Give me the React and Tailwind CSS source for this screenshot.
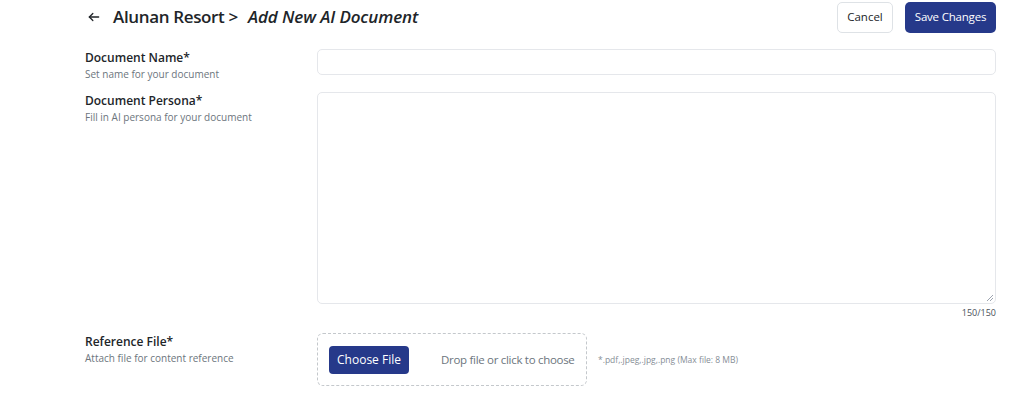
import React from "react";

export default function App() {
  return (
    <div className="w-[1024px] h-[412px] bg-white overflow-hidden text-[#212529]" style={{ fontFamily: '"Open Sans", "Noto Sans", sans-serif' }}>
      <div className="pl-[85px] pr-[28px]">
        {/* Header */}
        <div className="flex items-center justify-between h-[33px] pt-[1px]">
          <div className="flex items-center">
            <svg width="14" height="14" viewBox="0 0 24 24" fill="none" stroke="#212529" strokeWidth="2.2" strokeLinecap="round" strokeLinejoin="round" className="ml-[2px] mr-[12px] mt-[-1px]">
              <path d="M20 12H4" />
              <path d="M10 6l-6 6 6 6" />
            </svg>
            <span className="text-[17px] font-semibold tracking-[-0.35px]">Alunan Resort &gt;</span>
            <span className="text-[17px] font-semibold italic ml-[10px] tracking-[-0.1px]">Add New AI Document</span>
          </div>
          <div className="flex items-center gap-[12px]">
            <button className="h-[31px] w-[56px] rounded-[5px] border border-[#dee2e6] bg-white text-[11.5px] text-[#212529]">Cancel</button>
            <button className="h-[31px] w-[91px] rounded-[5px] bg-[#26398a] text-white text-[11.5px] tracking-[-0.2px]">Save Changes</button>
          </div>
        </div>

        {/* Document Name */}
        <div className="flex items-start mt-[16px]">
          <div className="w-[232px] shrink-0 pt-[1px]">
            <div className="text-[12px] font-semibold leading-[16px]">Document Name*</div>
            <div className="text-[10px] text-[#6c757d] leading-[14px] mt-[1px]">Set name for your document</div>
          </div>
          <div className="flex-1 h-[26px] rounded-[5px] border border-[#e5e7eb]" />
        </div>

        {/* Document Persona */}
        <div className="flex mt-[11px]">
          <div className="w-[232px] shrink-0 pt-[1px]">
            <div className="text-[12px] font-semibold leading-[16px]">Document Persona*</div>
            <div className="text-[10px] text-[#6c757d] leading-[14px] mt-[1px]">Fill in AI persona for your document</div>
          </div>
          <div className="flex-1 flex flex-col">
            <div className="relative h-[212px] rounded-[5px] border border-[#e5e7eb]">
              <svg width="7" height="7" viewBox="0 0 7 7" className="absolute right-[2px] bottom-[2px]" stroke="#9ca3af" strokeWidth="1">
                <path d="M7 1L1 7" />
                <path d="M7 4L4 7" />
              </svg>
            </div>
            <div className="text-right text-[9px] text-[#495057] mt-[2px] leading-[14px]">150/150</div>
          </div>
        </div>

        {/* Reference File */}
        <div className="flex mt-[13px]">
          <div className="w-[232px] shrink-0 pt-[1px]">
            <div className="text-[12px] font-semibold leading-[16px]">Reference File*</div>
            <div className="text-[10px] text-[#6c757d] leading-[14px] mt-[1px]">Attach file for content reference</div>
          </div>
          <div className="flex items-center">
            <div className="w-[270px] h-[53px] rounded-[6px] border border-dashed border-[#c4c8cc] flex items-center pl-[11px]">
              <button className="h-[28px] w-[80px] rounded-[4px] bg-[#26398a] text-white text-[12px]">Choose File</button>
              <span className="ml-[32px] text-[11.5px] text-[#6c757d] whitespace-nowrap tracking-[-0.3px]">Drop file or click to choose</span>
            </div>
            <span className="ml-[11px] text-[8.5px] text-[#868e96] mt-[2px] whitespace-nowrap">*.pdf,.jpeg,.jpg,.png (Max file: 8 MB)</span>
          </div>
        </div>
      </div>
    </div>
  );
}
